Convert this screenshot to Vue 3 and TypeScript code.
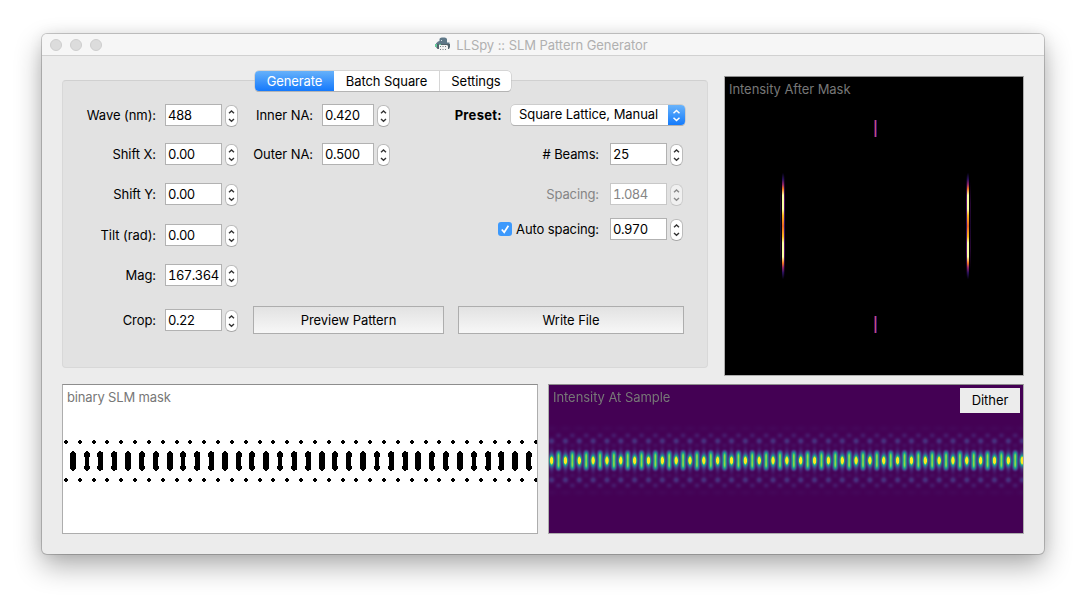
<script setup lang="ts">
import { onMounted, ref } from 'vue'

interface Field { label: string; value: string; disabled?: boolean; check?: boolean }

const main: Field[] = [
  { label: 'Wave (nm):', value: '488' },
  { label: 'Shift X:', value: '0.00' },
  { label: 'Shift Y:', value: '0.00' },
  { label: 'Tilt (rad):', value: '0.00' },
  { label: 'Mag:', value: '167.364' },
  { label: 'Crop:', value: '0.22' },
]
const apertures: Field[] = [
  { label: 'Inner NA:', value: '0.420' },
  { label: 'Outer NA:', value: '0.500' },
]
const lattice: Field[] = [
  { label: '# Beams:', value: '25' },
  { label: 'Spacing:', value: '1.084', disabled: true },
  { label: 'Auto spacing:', value: '0.970', check: true },
]

const PERIOD = 13.84
const bars = Array.from({ length: 34 }, (_, i) => Math.round(6.7 + i * 13.83))
const dots = Array.from({ length: 35 }, (_, i) => Math.round(1 + i * 13.83))

const canvas = ref<HTMLCanvasElement | null>(null)

const viridis = [
  [68, 1, 84], [72, 36, 117], [65, 68, 135], [53, 95, 141], [42, 120, 142],
  [33, 145, 140], [34, 168, 132], [68, 191, 112], [122, 209, 81], [189, 223, 38], [253, 231, 37],
]

function gauss(x: number, s: number): number {
  return Math.exp(-(x * x) / (2 * s * s))
}

function intensity(x: number, y: number): number {
  const u = x - PERIOD * Math.round(x / PERIOD)
  const w = Math.abs(u) - PERIOD / 2
  const v = Math.abs(y)
  return 1.15 * gauss(u, 1.5) * gauss(v, 3.2)
    + 0.28 * gauss(u, 1.6) * gauss(v, 6.5)
    + (0.88 - 0.06 * gauss(v, 3)) * gauss(w, 1.55) * Math.exp(-Math.pow(v / 9, 5))
    + 0.14 * gauss(u, 2) * gauss(v - 19.5, 2)
    + 0.065 * gauss(w, 2) * gauss(v - 25, 1.8)
    + 0.035 * gauss(w, 2) * gauss(v - 15, 1.8)
    + 0.015 * gauss(u, 4) * gauss(v - 32, 2)
}

onMounted(() => {
  const el = canvas.value
  const ctx = el?.getContext('2d')
  if (!el || !ctx) return
  const image = ctx.createImageData(el.width, el.height)
  for (let y = 0; y < el.height; y++) {
    for (let x = 0; x < el.width; x++) {
      const t = Math.min(0.9999, intensity(x - 2.1, y - 75)) * 10
      const i = Math.floor(t)
      const p = (y * el.width + x) * 4
      for (let c = 0; c < 3; c++) {
        image.data[p + c] = viridis[i][c] + (viridis[i + 1][c] - viridis[i][c]) * (t - i)
      }
      image.data[p + 3] = 255
    }
  }
  ctx.putImageData(image, 0, 0)
})
</script>

<template>
  <div class="desktop">
    <div class="window">
      <header class="titlebar">
        <div class="lights"><i /><i /><i /></div>
        <div class="title">
          <svg width="16" height="15" viewBox="0 0 16 15">
            <path d="M4.500 4V2C5.200.2 10.800 0 12 2V5.500H14.500V8H1V6.500L3 4.600Z" fill="#5f7888" />
            <path d="M1 7h14v3l-1 2h-1V9h-9v3H2.500L1 10Z" fill="#53636c" />
            <path d="M0 7h2v3H0zM4 7h2v1H4z" fill="#65c99b" />
            <path d="M4 8h8.500v5H10l-2 1.500L6 13H4Z" fill="#f4f4f4" />
            <path d="M5 9h1v1H5zM7.500 9h1v1h-1zM10 9h1v1h-1zM5 12h1v1H5zM7.500 12h1v1h-1zM10 12h1v1h-1z" fill="#777f84" />
            <path d="M6 3h1v1H6z" fill="#d8e0e5" />
          </svg>
          <span>LLSpy :: SLM Pattern Generator</span>
        </div>
      </header>

      <main class="content">
        <div class="top-row">
          <section class="group">
            <nav class="tabs">
              <span class="tab active">Generate</span>
              <span class="tab batch">Batch Square</span>
              <span class="tab settings">Settings</span>
            </nav>
            <div class="columns">
              <div class="fields main-fields">
                <template v-for="f in main" :key="f.label">
                  <label>{{ f.label }}</label>
                  <span class="input">{{ f.value }}</span>
                  <span class="stepper">
                    <svg width="11" height="20" viewBox="0 0 11 20"><path d="M3 7.200L5.500 5L8 7.200M3 13L5.500 15.200L8 13" /></svg>
                  </span>
                </template>
              </div>
              <div class="right-part">
                <div class="upper">
                  <div class="fields aperture-fields">
                    <template v-for="f in apertures" :key="f.label">
                      <label>{{ f.label }}</label>
                      <span class="input">{{ f.value }}</span>
                      <span class="stepper">
                        <svg width="11" height="20" viewBox="0 0 11 20"><path d="M3 7.200L5.500 5L8 7.200M3 13L5.500 15.200L8 13" /></svg>
                      </span>
                    </template>
                  </div>
                  <div class="lattice">
                    <div class="preset">
                      <b>Preset:</b>
                      <div class="combo">
                        <span>Square Lattice, Manual</span>
                        <svg width="17" height="20" viewBox="0 0 17 20"><path d="M5.500 8.300L8.500 5.500L11.500 8.300M5.500 12.700L8.500 15.500L11.500 12.700" /></svg>
                      </div>
                    </div>
                    <div class="fields lattice-fields">
                      <template v-for="f in lattice" :key="f.label">
                        <label :class="{ disabled: f.disabled }">
                          <svg v-if="f.check" class="check" width="14" height="14" viewBox="0 0 14 14"><rect width="14" height="14" rx="3" fill="#3c99fc" /><path d="M3.800 7.500L6.200 10.300L10.400 3.700" fill="none" stroke="#fff" stroke-width="1.700" /></svg>
                          {{ f.label }}
                        </label>
                        <span class="input" :class="{ disabled: f.disabled }">{{ f.value }}</span>
                        <span class="stepper" :class="{ disabled: f.disabled }">
                          <svg width="11" height="20" viewBox="0 0 11 20"><path d="M3 7.200L5.500 5L8 7.200M3 13L5.500 15.200L8 13" /></svg>
                        </span>
                      </template>
                    </div>
                  </div>
                </div>
                <div class="actions">
                  <button class="preview">Preview Pattern</button>
                  <button class="write">Write File</button>
                </div>
              </div>
            </div>
          </section>

          <section class="plot pupil">
            <svg width="298" height="298" viewBox="0 0 298 298" shape-rendering="crispEdges">
              <defs>
                <linearGradient id="beam" x1="0" y1="0" x2="0" y2="1">
                  <stop offset="0" stop-color="#000004" />
                  <stop offset=".06" stop-color="#29115a" />
                  <stop offset=".11" stop-color="#932667" />
                  <stop offset=".15" stop-color="#f17720" />
                  <stop offset=".21" stop-color="#fcffa4" />
                  <stop offset=".34" stop-color="#fcffa4" />
                  <stop offset=".40" stop-color="#fbb91f" />
                  <stop offset=".5" stop-color="#ed6925" />
                  <stop offset=".60" stop-color="#fbb91f" />
                  <stop offset=".66" stop-color="#fcffa4" />
                  <stop offset=".79" stop-color="#fcffa4" />
                  <stop offset=".85" stop-color="#f17720" />
                  <stop offset=".89" stop-color="#932667" />
                  <stop offset=".94" stop-color="#29115a" />
                  <stop offset="1" stop-color="#000004" />
                </linearGradient>
                <linearGradient id="fringe" x1="0" y1="0" x2="0" y2="1">
                  <stop offset="0" stop-color="#000004" />
                  <stop offset=".25" stop-color="#56106e" />
                  <stop offset=".5" stop-color="#35115f" />
                  <stop offset=".75" stop-color="#56106e" />
                  <stop offset="1" stop-color="#000004" />
                </linearGradient>
              </defs>
              <rect x="57" y="96" width="2" height="106" fill="url(#beam)" />
              <rect x="59" y="98" width="1" height="102" fill="url(#fringe)" />
              <rect x="55" y="105" width="1" height="88" fill="url(#fringe)" opacity=".45" />
              <rect x="242" y="96" width="2" height="106" fill="url(#beam)" />
              <rect x="241" y="98" width="1" height="102" fill="url(#fringe)" />
              <rect x="245" y="105" width="1" height="88" fill="url(#fringe)" opacity=".45" />
              <g v-for="y in [43, 239]" :key="y">
                <rect x="149" :y="y" width="3" height="17" fill="#420f6c" />
                <rect x="150" :y="y" width="1" height="17" fill="#c94f65" />
              </g>
            </svg>
            <span class="caption">Intensity After Mask</span>
          </section>
        </div>

        <div class="bottom-row">
          <section class="plot mask">
            <svg width="474" height="148" viewBox="0 0 474 148" shape-rendering="crispEdges">
              <g v-for="(x, i) in bars" :key="'b' + x">
                <path v-if="i % 7 === 1" :d="`M${x + 2} 66h2v1h1v1h1v4h-1v9h1v3h-1v1h-1v1h-2v-1h-1v-1h-1v-3h1v-9h-1v-4h1v-1h1z`" />
                <path v-else-if="i % 7 === 2 || i % 7 === 3" :d="`M${x + 2} 66h2v1h2v18h-2v1h-2v-1h-1v-1h-1v-3h1v-9h-1v-4h1v-1h1z`" />
                <path v-else-if="i % 7 > 4" :d="`M${x + 2} 66h2v1h1v1h1v4h-1v9h1v3h-1v1h-1v1h-2v-1h-1v-1h-1V68h1v-1h1z`" />
                <path v-else :d="`M${x + 2} 66h2v1h1v1h1v16h-1v1h-1v1h-2v-1h-1v-1h-1V68h1v-1h1z`" />
              </g>
              <g v-for="x in dots" :key="'d' + x">
                <path :d="`M${x + 1} 55h2v1h1v2h-1v1h-2v-1h-1v-2h1zM${x + 1} 93h2v1h1v2h-1v1h-2v-1h-1v-2h1z`" />
              </g>
            </svg>
            <span class="caption">binary SLM mask</span>
          </section>
          <section class="plot sample">
            <canvas ref="canvas" width="474" height="148" />
            <span class="caption">Intensity At Sample</span>
            <span class="dither">Dither</span>
          </section>
        </div>
      </main>
    </div>
  </div>
</template>

<style>
html, body { margin: 0; background: #fff; overflow: hidden; }
</style>

<style scoped>
* { box-sizing: border-box; }
.desktop {
  width: 1086px; height: 604px; padding: 34px 42px 50px; overflow: hidden; background: #fff;
  font: 13px/16px Inter, "Liberation Sans", sans-serif; letter-spacing: -0.06px; color: #000;
}
.window {
  width: 1002px; height: 520px; border-radius: 5px; background: #ececec;
  box-shadow: 0 0 0 1px rgba(0, 0, 0, .19), 0 12px 28px rgba(0, 0, 0, .32), 0 0 14px rgba(0, 0, 0, .08);
}
.titlebar {
  display: grid; grid-template-columns: 1fr auto 1fr; align-items: center; height: 22px;
  border-bottom: 1px solid #d1d1d1; background: #f6f6f6; border-radius: 5px 5px 0 0;
}
.lights { display: flex; gap: 8px; padding-left: 8px; }
.lights i { width: 12px; height: 12px; border: 1px solid #cecece; border-radius: 50%; background: #dcdcdc; }
.title { display: flex; align-items: center; gap: 5px; padding-right: 3px; color: #b0b0b0; white-space: nowrap; }
.title span { padding-top: 1px; }
svg, canvas { display: block; flex: none; }
.content { padding: 20px 20px 0; display: flex; flex-direction: column; gap: 8px; }
.top-row { display: flex; justify-content: space-between; }
.group {
  width: 646px; height: 288px; margin-top: 4px; border: 1px solid #d8d8d8; border-radius: 4px;
  border-top-color: #d0d0d0; background: #e2e2e2;
}
.tabs {
  display: flex; width: 256px; height: 20px; margin: -10px 0 0 192px; border-radius: 4px; background: #fff;
  box-shadow: 0 0 0 .5px #bdbdbd, 0 1px 0 #aaa;
}
.tab { display: flex; align-items: center; justify-content: center; }
.active { width: 79px; border-radius: 4px 0 0 4px; color: #fff; background: linear-gradient(#66b1fa, #1479fc); letter-spacing: -.1px; }
.batch { width: 105px; }
.settings { width: 72px; padding-left: 1px; border-left: 1px solid #d6d6d6; }
.columns { display: flex; padding-top: 13px; }
.fields { display: grid; column-gap: 3px; align-items: start; }
.fields label { display: flex; justify-content: flex-end; align-items: center; gap: 4px; height: 22px; padding-right: 6px; white-space: nowrap; }
.main-fields { width: 175px; grid-template-columns: 99px 57px 13px; grid-template-rows: 39px 40px 41px 40px 45px 22px; }
.right-part { padding-left: 15px; }
.upper { display: flex; height: 202px; }
.aperture-fields { width: 137px; grid-template-columns: 66px 52px 13px; grid-template-rows: 39px 22px; align-content: start; }
.lattice { width: 295px; }
.preset { display: flex; justify-content: flex-end; align-items: center; height: 22px; gap: 9px; }
.preset b { font-weight: 700; letter-spacing: .3px; }
.combo {
  display: flex; justify-content: space-between; width: 174px; height: 20px; overflow: hidden; padding-left: 8px;
  border-radius: 4px; background: #fff; box-shadow: 0 0 0 .5px #b8b8b8, 0 1px 0 #aaa; line-height: 19px; white-space: nowrap;
}
.combo svg { background: linear-gradient(#69b3fa, #147bfc); fill: none; stroke: #fff; stroke-width: 1.5; }
.lattice-fields { grid-template-columns: 1fr 57px 13px; grid-template-rows: 40px 35px 22px; padding: 17px 2px 0 0; }
.lattice-fields label { padding-right: 8px; letter-spacing: -.12px; }
.input {
  height: 22px; padding: 2px 0 0 2px; border: 1px solid #b2b2b2; background: #fff;
  letter-spacing: -.5px; font-variant-numeric: tabular-nums; white-space: nowrap;
}
.stepper { width: 13px; height: 22px; margin-top: 1px; border: 1px solid #bcbcbc; border-bottom-color: #a9a9a9; border-radius: 6px; background: #fff; }
.stepper svg { fill: none; stroke: #333; stroke-width: 1.4; }
label.disabled { color: #858585; }
.input.disabled { color: #858585; border-color: #c8c8c8; }
.stepper.disabled { opacity: .5; }
.actions { display: flex; gap: 14px; }
button {
  height: 28px; padding: 0; border: 1px solid #adadad; background: linear-gradient(#e2e2e2, #f7f7f7);
  font: inherit; letter-spacing: inherit; color: #000;
}
.preview { width: 191px; }
.write { width: 226px; }
.plot { position: relative; border: 1px solid #adadad; border-top-color: #8d8d8d; }
.pupil { width: 300px; height: 300px; background: #000; }
.bottom-row { display: flex; justify-content: space-between; }
.mask, .sample { width: 476px; height: 150px; }
.mask { background: #fff; }
.sample { background: #440154; }
.caption { position: absolute; top: 4px; left: 4px; color: #777; white-space: nowrap; }
.mask .caption { letter-spacing: -.15px; }
.dither { position: absolute; top: 3px; right: 3px; width: 60px; height: 25px; line-height: 25px; background: #ececec; text-align: center; }
</style>
